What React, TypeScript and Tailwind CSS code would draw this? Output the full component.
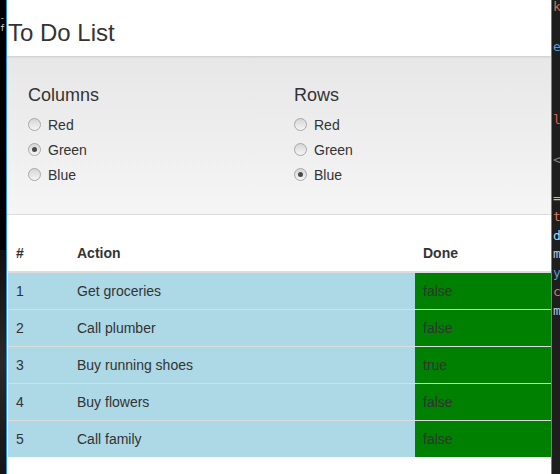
import React from "react";

const font = { fontFamily: '"Liberation Sans", Arial, Helvetica, sans-serif' };

function Radio({ checked }: { checked?: boolean }) {
  return (
    <span className="w-[13px] h-[13px] rounded-full border border-[#a8a8a8] bg-gradient-to-b from-[#d6d6d6] to-[#f6f6f6] flex items-center justify-center shrink-0">
      {checked && <span className="w-[5px] h-[5px] rounded-full bg-[#4a4a4a]" />}
    </span>
  );
}

function Group({ title, selected }: { title: string; selected: string }) {
  return (
    <div className="flex flex-col">
      <div className="text-[18px] leading-[20px] text-[#333]">{title}</div>
      <div className="mt-[7px] flex flex-col">
        {["Red", "Green", "Blue"].map((c) => (
          <div key={c} className="h-[25px] flex items-center">
            <Radio checked={c === selected} />
            <span className="ml-[7px] text-[14px] leading-[20px] text-[#333]">{c}</span>
          </div>
        ))}
      </div>
    </div>
  );
}

const rows = [
  { n: 1, a: "Get groceries", d: "false" },
  { n: 2, a: "Call plumber", d: "false" },
  { n: 3, a: "Buy running shoes", d: "true" },
  { n: 4, a: "Buy flowers", d: "false" },
  { n: 5, a: "Call family", d: "false" },
];

const code: { c: string; y: number; cls: string }[] = [
  { c: "k", y: -1, cls: "text-[#d0704f]" },
  { c: "e", y: 39, cls: "text-[#569cd6]" },
  { c: "l", y: 112, cls: "text-[#d0604f]" },
  { c: "<", y: 152, cls: "text-[#808080]" },
  { c: "=", y: 190, cls: "text-[#d7ba7d]" },
  { c: "t", y: 209, cls: "text-[#ce7c5a]" },
  { c: "d", y: 228, cls: "text-[#9cdcfe]" },
  { c: "m", y: 246, cls: "text-[#b4c8dc]" },
  { c: "y", y: 265, cls: "text-[#569cd6]" },
  { c: "c", y: 284, cls: "text-[#ce7c5a]" },
  { c: "m", y: 303, cls: "text-[#b4c8dc]" },
];

export default function App() {
  return (
    <div className="w-[560px] h-[474px] flex bg-black overflow-hidden" style={font}>
      <div className="w-[6px] h-full bg-black relative">
        <span className="absolute left-0 top-[14px] text-[8px] leading-[10px] text-[#ddd]" style={{ fontFamily: '"DejaVu Sans Mono", monospace' }}>-f</span>
        <div className="absolute left-0 top-[250px] w-[6px] h-[224px] bg-gradient-to-b from-[#111] via-[#2a2a2a] to-[#151515]" />
      </div>
      <div className="w-[1px] h-full bg-[#2b8ff0]" />
      <div className="w-[544px] h-full bg-white flex flex-col">
        <div className="h-[56px] shrink-0 relative z-10 bg-white shadow-[0_1px_2px_rgba(0,0,0,0.12)]">
          <h3 className="pl-[1px] mt-[20px] text-[24px] leading-[26px] text-[#333]">To Do List</h3>
        </div>
        <div className="h-[159px] shrink-0 bg-gradient-to-b from-[#e7e7e7] to-[#f5f5f5] border-b border-[#dcdcdc] flex pl-[21px] pt-[29px]">
          <div className="w-[266px]">
            <Group title="Columns" selected="Green" />
          </div>
          <Group title="Rows" selected="Blue" />
        </div>
        <div className="pl-[1px]">
          <table className="w-[543px] table-fixed border-collapse text-[14px] leading-[20px] text-[#333]">
            <colgroup>
              <col className="w-[61px]" />
              <col className="w-[346px]" />
              <col className="w-[136px]" />
            </colgroup>
            <thead>
              <tr className="h-[57px] border-b-2 border-[#ddd]">
                <th className="text-left align-bottom px-[8px] pb-[8px] font-bold">#</th>
                <th className="text-left align-bottom px-[8px] pb-[8px] font-bold">Action</th>
                <th className="text-left align-bottom px-[8px] pb-[8px] font-bold">Done</th>
              </tr>
            </thead>
            <tbody>
              {rows.map((r, i) => (
                <tr key={r.n} className={i === 0 ? "bg-[#add8e6]" : "bg-[#add8e6] border-t border-[#ddd]"}>
                  <td className="px-[8px] py-[8px]">{r.n}</td>
                  <td className="px-[8px] py-[8px]">{r.a}</td>
                  <td className="px-[8px] py-[8px] bg-[#008000]">{r.d}</td>
                </tr>
              ))}
            </tbody>
          </table>
        </div>
      </div>
      <div className="w-[1px] h-full bg-[#2b8ff0]" />
      <div className="flex-1 h-full bg-[#1e1e1e] relative" style={{ fontFamily: '"DejaVu Sans Mono", monospace' }}>
        {code.map((k, i) => (
          <span key={i} className={"absolute left-[1px] text-[13px] leading-[16px] " + k.cls} style={{ top: k.y }}>
            {k.c}
          </span>
        ))}
      </div>
    </div>
  );
}
